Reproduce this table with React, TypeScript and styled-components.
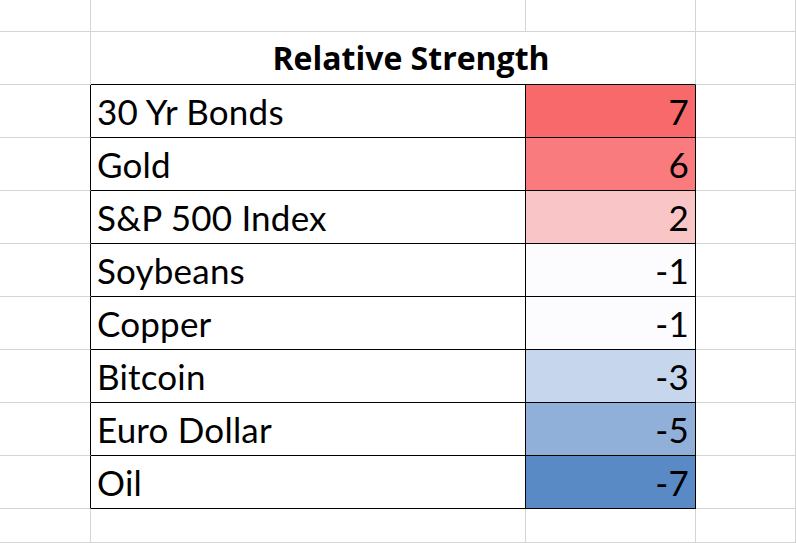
import React from 'react'
import styled, { createGlobalStyle } from 'styled-components'

type Row = { name: string; value: number; fill: string }

const rows: Row[] = [
  { name: '30 Yr Bonds', value: 7, fill: '#F8696B' },
  { name: 'Gold', value: 6, fill: '#F97B7E' },
  { name: 'S&P 500 Index', value: 2, fill: '#FAC5C7' },
  { name: 'Soybeans', value: -1, fill: '#FCFCFF' },
  { name: 'Copper', value: -1, fill: '#FCFCFF' },
  { name: 'Bitcoin', value: -3, fill: '#C6D6EC' },
  { name: 'Euro Dollar', value: -5, fill: '#90B0D9' },
  { name: 'Oil', value: -7, fill: '#5A8AC6' },
]

function App() {
  return (
    <>
      <GlobalStyle />
      <Sheet>
        <Cell />
        <Cell />
        <Cell />
        <Cell />

        <Cell />
        <TitleCell>Relative Strength</TitleCell>
        <Cell />

        {rows.map((row, i) => (
          <React.Fragment key={i}>
            <Cell $edge />
            <NameCell>{row.name}</NameCell>
            <ValueCell $fill={row.fill}>{row.value}</ValueCell>
            <Cell />
          </React.Fragment>
        ))}

        <Cell />
        <Cell />
        <Cell />
        <Cell />
      </Sheet>
    </>
  )
}

const GlobalStyle = createGlobalStyle`
  html, body {
    margin: 0;
    padding: 0;
    background: #ffffff;
    overflow: hidden;
  }
  body {
    font-family: Lato, "Open Sans", sans-serif;
    color: #000000;
  }
`

const Sheet = styled.div`
  width: 796px;
  height: 543px;
  display: grid;
  grid-template-columns: 91px 435px 170px 1fr;
  grid-template-rows: 32px repeat(9, 53px) 1fr;
  overflow: hidden;
`

const Cell = styled.div<{ $edge?: boolean }>`
  box-sizing: border-box;
  border-right: 1px solid ${(p) => (p.$edge ? '#000000' : '#d4d4d4')};
  border-bottom: 1px solid #d4d4d4;
`

const TitleCell = styled.div`
  grid-column: span 2;
  box-sizing: border-box;
  border-right: 1px solid #d4d4d4;
  border-bottom: 1px solid #000000;
  display: flex;
  align-items: flex-end;
  justify-content: center;
  padding: 0 0 10px 36px;
  font-family: "Open Sans", Lato, sans-serif;
  font-size: 32px;
  font-weight: 700;
  line-height: 1;
`

const DataCell = styled.div`
  box-sizing: border-box;
  border-right: 1px solid #000000;
  border-bottom: 1px solid #000000;
  display: flex;
  align-items: flex-end;
  font-size: 35px;
  letter-spacing: 0.2px;
  line-height: 1;
  padding-bottom: 8px;
`

const NameCell = styled(DataCell)`
  padding-left: 6px;
`

const ValueCell = styled(DataCell)<{ $fill: string }>`
  justify-content: flex-end;
  padding-right: 6px;
  background: ${(p) => p.$fill};
`

export default App
